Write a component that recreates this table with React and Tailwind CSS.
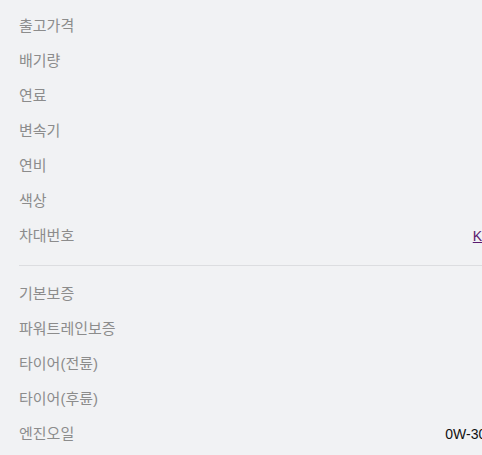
import React from "react";

const specs = [
  { label: "출고가격", value: "" },
  { label: "배기량", value: "" },
  { label: "연료", value: "" },
  { label: "변속기", value: "" },
  { label: "연비", value: "" },
  { label: "색상", value: "" },
  { label: "차대번호", value: "KMH1234", link: true },
];

const warranty = [
  { label: "기본보증", value: "" },
  { label: "파워트레인보증", value: "" },
  { label: "타이어(전륜)", value: "" },
  { label: "타이어(후륜)", value: "" },
  { label: "엔진오일", value: "0W-30, 5W-30" },
];

function Row({ label, value, link }) {
  return (
    <div className="flex h-[35px] items-center justify-between">
      <span className="text-[15px] text-[#8c8c8c]">{label}</span>
      {link ? (
        <a href="#" className="text-[14px] text-[#5b1a6e] underline">
          {value}
        </a>
      ) : (
        <span className="text-[14px] text-[#111]">{value}</span>
      )}
    </div>
  );
}

export default function App() {
  return (
    <div
      className="min-h-screen w-full overflow-hidden bg-[#f1f2f4]"
      style={{ fontFamily: '"Liberation Sans", "Noto Sans CJK KR", sans-serif' }}
    >
      <div className="w-[555px] pl-[19px] pr-5 pt-[9px]">
        {specs.map((s) => (
          <Row key={s.label} {...s} />
        ))}
        <div className="mt-[11px] mb-[11px] h-px bg-[#dcdde0]" />
        {warranty.map((s) => (
          <Row key={s.label} {...s} />
        ))}
      </div>
    </div>
  );
}
